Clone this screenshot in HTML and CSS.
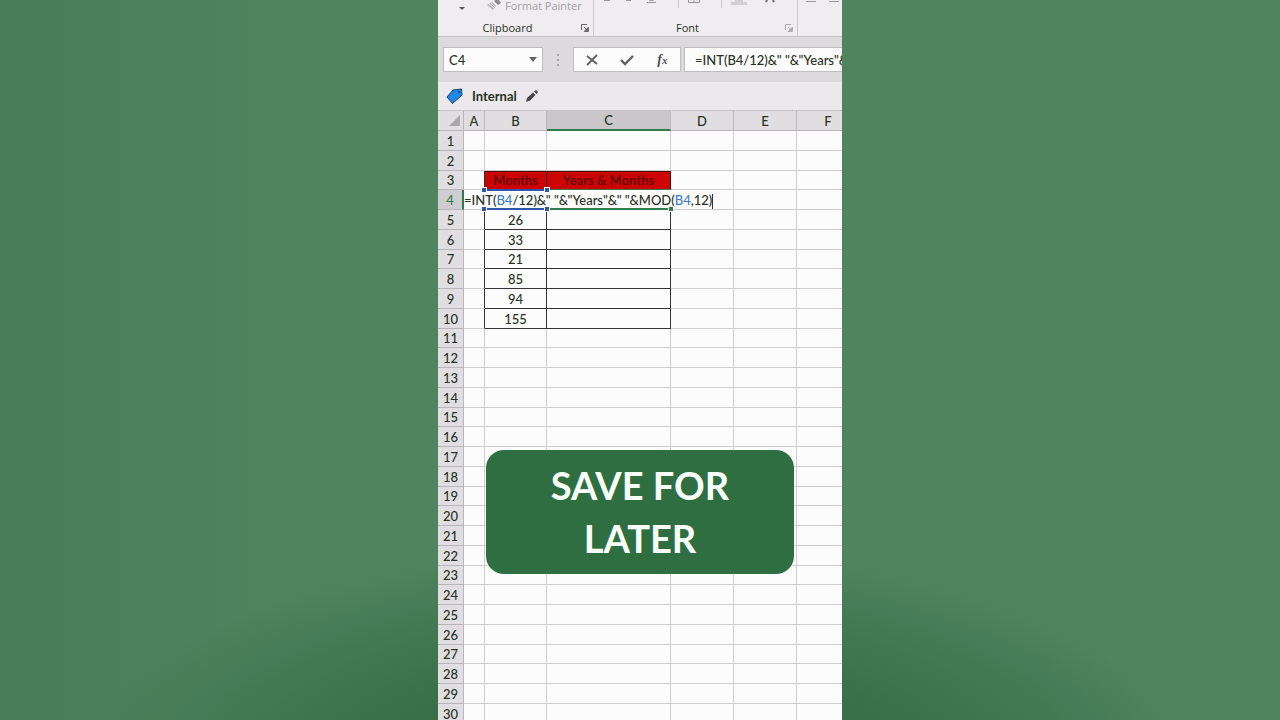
FILE: index.html
```html
<!DOCTYPE html>
<html lang="en">
<head>
    <meta charset="UTF-8">
    <meta name="viewport" content="width=device-width, initial-scale=1.0">
    <title>Months to Years &amp; Months</title>
    <link rel="stylesheet" href="styles.css">
</head>
<body>

<main class="stage">
    <div class="phone">
        <!-- RIBBON -->
        <div class="ribbon">
            <div class="ribbon-group clipboard">
                <div class="tools">
                    <svg width="6" height="11" viewBox="0 0 6 11"><path d="M0 7h6l-3 3z" fill="#555"/></svg>
                    <button class="tool-btn">
                        <svg width="14" height="11" viewBox="0 0 14 11"><path d="M8 0h4l2 3-3 2-4-4z" fill="#8c8a8c"/><path d="M5 2l4 4-3 4-6-5z" fill="#b4b2b4"/><path d="M2 4l5 4M4 3l4 4" stroke="#efedef"/></svg>
                        Format Painter
                    </button>
                </div>
                <div class="group-footer">
                    <span class="group-label">Clipboard</span>
                    <svg class="launcher" width="8" height="8" viewBox="0 0 8 8"><path d="M.5 6V.5H6" fill="none" stroke="#666"/><path d="M7.500 3v4.500H3zM3 3l3 3" fill="#666" stroke="#666" stroke-width=".8"/></svg>
                </div>
            </div>
            <div class="ribbon-group font">
                <div class="tools">
                    <svg width="190" height="11" viewBox="0 0 190 11" fill="none" stroke="#98969a">
                        <path d="M2 .5h6M24 .5h5M47 0q3 1 5 0M45 2.500h9"/>
                        <path d="M76.500 0v8M119.500 0v8" stroke="#c8c6c8"/>
                        <path d="M86.500 0v2.500h11V0M92 0v2"/>
                        <path d="M133 1h8M137 0v1" stroke="#b5b3b5"/>
                        <path d="M129 2h16v3h-16z" fill="#d0ced0" stroke="none"/>
                        <path d="M164 2l1-2M172 2l-1-2" stroke="#666" stroke-width="2"/>
                    </svg>
                </div>
                <div class="group-footer">
                    <span class="group-label">Font</span>
                    <svg class="launcher muted" width="8" height="8" viewBox="0 0 8 8"><path d="M.5 6V.5H6" fill="none" stroke="#666"/><path d="M7.500 3v4.500H3zM3 3l3 3" fill="#666" stroke="#666" stroke-width=".8"/></svg>
                </div>
            </div>
            <div class="ribbon-group alignment">
                <div class="tools">
                    <svg width="36" height="11" viewBox="0 0 36 11" stroke="#999"><path d="M0 1.500h10M23 1.500h10"/></svg>
                </div>
                <div class="group-footer"></div>
            </div>
        </div>

        <!-- NAME BOX + FORMULA BAR -->
        <div class="formula-row">
            <div class="name-box">
                <input type="text" value="C4" aria-label="Name Box">
                <button class="icon-btn" aria-label="Open names"><svg width="8" height="6" viewBox="0 0 8 6"><path d="M0 0h8L4 5z" fill="#666"/></svg></button>
            </div>
            <svg class="dots" width="2" height="12" viewBox="0 0 2 12" fill="#a5a3a5"><path d="M0 0h2v2H0zM0 5h2v2H0zM0 10h2v2H0z"/></svg>
            <div class="fx-box">
                <button class="icon-btn" aria-label="Cancel"><svg width="12" height="12" viewBox="0 0 12 12"><path d="M1 2l10 8M11 1L1 11" stroke="#606060" stroke-width="1.800" fill="none"/></svg></button>
                <button class="icon-btn" aria-label="Enter"><svg width="14" height="12" viewBox="0 0 14 12"><path d="M1 6l4 4 8-8" stroke="#606060" stroke-width="2.400" fill="none"/></svg></button>
                <button class="icon-btn fx" aria-label="Insert function">f<small>x</small></button>
            </div>
            <input class="formula-input" type="text" aria-label="Formula Bar" value="=INT(B4/12)&amp;&quot; &quot;&amp;&quot;Years&quot;&amp;&quot; &quot;&amp;MOD(B4,12)">
        </div>

        <!-- SENSITIVITY LABEL -->
        <div class="label-row">
            <svg width="17" height="17" viewBox="0 0 17 17"><path d="M1 9l6-7 8.500-1 .5 6-9.500 8.500z" fill="#1e88e8" stroke="#1c3f66" stroke-linejoin="round"/><circle cx="13" cy="4" r="1" fill="#1c3f66"/></svg>
            <strong>Internal</strong>
            <svg width="12" height="12" viewBox="0 0 12 12"><path d="M0 12l1-4 6-5.500 2.500 2.500L4 10.500z" fill="#444"/><path d="M8 1.500l2-1.500 2 2-1.500 2z" fill="#444"/></svg>
        </div>

        <!-- WORKSHEET -->
        <div class="sheet">
            <table class="grid">
                <colgroup>
                    <col class="col-head"><col class="col-a"><col class="col-b"><col class="col-c"><col class="col-d"><col class="col-d"><col class="col-d">
                </colgroup>
                <thead>
                    <tr>
                        <th class="corner"><svg width="11" height="11" viewBox="0 0 11 11"><path d="M11 0v11H0z" fill="#a9a7a9"/></svg></th>
                        <th>A</th><th>B</th><th class="selected">C</th><th>D</th><th>E</th><th>F</th>
                    </tr>
                </thead>
                <tbody id="rows"></tbody>
            </table>
            <button class="save-btn">SAVE FOR LATER</button>
        </div>
    </div>
</main>

<script>
    const months = { 5: 26, 6: 33, 7: 21, 8: 85, 9: 94, 10: 155 };
    const tbody = document.getElementById('rows');

    function renderCells(row) {
        if (row === 3) {
            return '<td class="edge"></td><td class="title">Months</td><td class="title">Years &amp; Months</td><td></td><td></td><td></td>';
        }
        // Row being edited: the formula spills over A to D
        if (row === 4) {
            return `<td class="editing" colspan="4">
                <div class="editor" contenteditable="true" spellcheck="false">=INT(<span class="ref">B4</span>/12)&amp;" "&amp;"Years"&amp;" "&amp;MOD(<span class="ref">B4</span>,12)<i class="caret"></i></div>
                <div class="ref-box"><i></i><i></i><i></i><i></i></div>
                <div class="active-box"><i></i></div>
            </td><td></td><td></td>`;
        }
        if (months[row]) {
            return `<td class="edge"></td><td class="data">${months[row]}</td><td class="data"></td><td></td><td></td><td></td>`;
        }
        return '<td></td>'.repeat(6);
    }

    let html = '';
    for (let row = 1; row <= 30; row++) {
        html += `<tr><th class="${row === 4 ? 'current' : ''}">${row}</th>${renderCells(row)}</tr>`;
    }
    tbody.innerHTML = html;
</script>

</body>
</html>
```
FILE: styles.css
```css
:root {
    --ribbon: #efedef;
    --bar: #dcdadd;
    --line: #cfccd0;
    --text: #283222;
    --excel-green: #2f7d4a;
    --ref-blue: #2f57a8;
    --sheet-font: Lato, "Open Sans", sans-serif;
    --ui-font: "Open Sans", "Noto Sans", sans-serif;
}

* { margin: 0; padding: 0; box-sizing: border-box; }

body {
    font-family: var(--sheet-font);
    font-size: 13px;
    font-weight: 500;
    color: var(--text);
}

button, input { font: inherit; color: inherit; background: none; border: none; outline: none; }
svg { display: block; flex: none; }

.stage {
    display: grid;
    grid-template-columns: 1fr minmax(404px, 31vw) 1fr;
    height: 100vh;
    overflow: hidden;
    background:
        radial-gradient(44vw 35vh at 50% 111%, #376f46 0%, #376f46 50%, #3e774e 70%, #467c57 86%, rgba(78, 128, 93, 0) 102%),
        linear-gradient(90deg, #4a7c59 0%, #50845f 28%, #50845f 100%);
}

.phone {
    grid-column: 2;
    display: flex;
    flex-direction: column;
    min-height: 0;
    overflow: hidden;
    background: #fdfcfd;
}

/* Ribbon */
.ribbon {
    display: flex;
    height: 37px;
    flex: none;
    overflow: hidden;
    background: var(--ribbon);
    border-bottom: 1px solid #c6c4c6;
    font-family: var(--ui-font);
    font-size: 11px;
}
.ribbon-group {
    display: flex;
    flex-direction: column;
    justify-content: space-between;
    flex: none;
    border-right: 1px solid #cccacc;
}
.clipboard { width: 156px; }
.font { width: 204px; }
.alignment { flex: 1; border-right: none; }
.tools { display: flex; height: 11px; flex: none; padding-left: 8px; }
.clipboard .tools { padding-left: 21px; gap: 22px; }
.tool-btn { display: flex; align-items: center; gap: 4px; height: 11px; line-height: 11px; color: #a3a1a3; white-space: nowrap; }
.group-footer { display: flex; align-items: center; height: 17px; flex: none; }
.group-label { flex: 1; padding-right: 4px; text-align: center; line-height: 17px; }
.launcher { margin-right: 4px; }
.launcher.muted { opacity: 0.5; }

/* Formula bar */
.formula-row {
    display: flex;
    align-items: center;
    height: 45px;
    flex: none;
    padding-left: 5px;
    background: var(--bar);
}
.name-box, .fx-box, .formula-input {
    height: 25px;
    background: #fdfcfd;
    border: 1px solid #bfbdc0;
}
.name-box { display: flex; width: 100px; padding: 0 5px; }
.name-box input { flex: 1; min-width: 0; }
.dots { margin: 0 14px; }
.fx-box { display: flex; width: 108px; margin-right: 3px; }
.fx-box .icon-btn { flex: 1; }
.icon-btn { display: flex; align-items: center; justify-content: center; cursor: pointer; }
.fx { font: italic bold 14px "Liberation Serif", serif; color: #505050; }
.fx small { font-size: 11px; }
.formula-input { flex: 1; min-width: 0; padding-left: 10px; border-right: none; }

/* Sensitivity label */
.label-row {
    display: flex;
    align-items: center;
    gap: 9px;
    height: 29px;
    flex: none;
    padding-left: 8px;
    background: #ebe9eb;
    border-bottom: 1px solid #c6c4c6;
}

/* Worksheet */
.sheet { position: relative; flex: 1; min-height: 0; overflow: hidden; }
.grid { table-layout: fixed; width: 422px; border-collapse: separate; border-spacing: 0; }
.col-head { width: 26px; }
.col-a { width: 21px; }
.col-b { width: 62px; }
.col-c { width: 124px; }
.col-d { width: 63px; }

.grid th, .grid td {
    height: 20px;
    line-height: 18px;
    text-align: center;
    border-right: 1px solid var(--line);
    border-bottom: 1px solid var(--line);
    white-space: nowrap;
}
.grid tbody tr:nth-child(4n+3) > * { height: 19px; }
.grid th { font-weight: 500; background: #e0dee1; border-color: #b8b6b9; }
.grid th.selected { background: #c9c7c9; border-bottom: 2px solid var(--excel-green); }
.grid th.current { background: #cfcdd0; color: var(--excel-green); border-right: 2px solid var(--excel-green); }
.corner svg { margin-left: 11px; }

.grid td.edge { border-right-color: #333; }
.grid td.data { border-color: #333; }
.grid td.title {
    background: #cc0404;
    color: #6a0404;
    font-weight: bold;
    border-color: #4a0505;
    box-shadow: inset 0 1px #4a0505;
}

/* Cell editor */
.grid td.editing { position: relative; text-align: left; background: #fdfcfd; }
.editor { outline: none; height: 18px; line-height: 18px; }
.ref { color: #3f7cc4; }
.caret { display: inline-block; width: 1px; height: 15px; vertical-align: middle; background: #333; }
.ref-box, .active-box {
    position: absolute;
    top: -1px;
    height: 21px;
    border-style: solid;
    pointer-events: none;
}
.ref-box { left: 20px; width: 63px; border-color: var(--ref-blue); border-width: 2px 0; }
.active-box { left: 86px; width: 121px; border-color: var(--excel-green); border-width: 1px 0 2px; }
.ref-box i, .active-box i {
    position: absolute;
    width: 6px;
    height: 6px;
    border: 1px solid #fdfcfd;
    background: var(--ref-blue);
}
.ref-box i:nth-child(1) { top: -4px; left: -3px; }
.ref-box i:nth-child(2) { top: -4px; right: -3px; }
.ref-box i:nth-child(3) { bottom: -4px; left: -3px; }
.ref-box i:nth-child(4) { bottom: -4px; right: -3px; }
.active-box i { bottom: -4px; right: -3px; background: var(--excel-green); }

/* Call to action over the sheet */
.save-btn {
    position: absolute;
    top: 339px;
    left: 12%;
    right: 12%;
    padding: 9px 60px;
    border-radius: 18px;
    background: #2e6e41;
    color: #f8fff8;
    font-size: 38px;
    font-weight: bold;
    line-height: 53px;
    cursor: pointer;
}
```
